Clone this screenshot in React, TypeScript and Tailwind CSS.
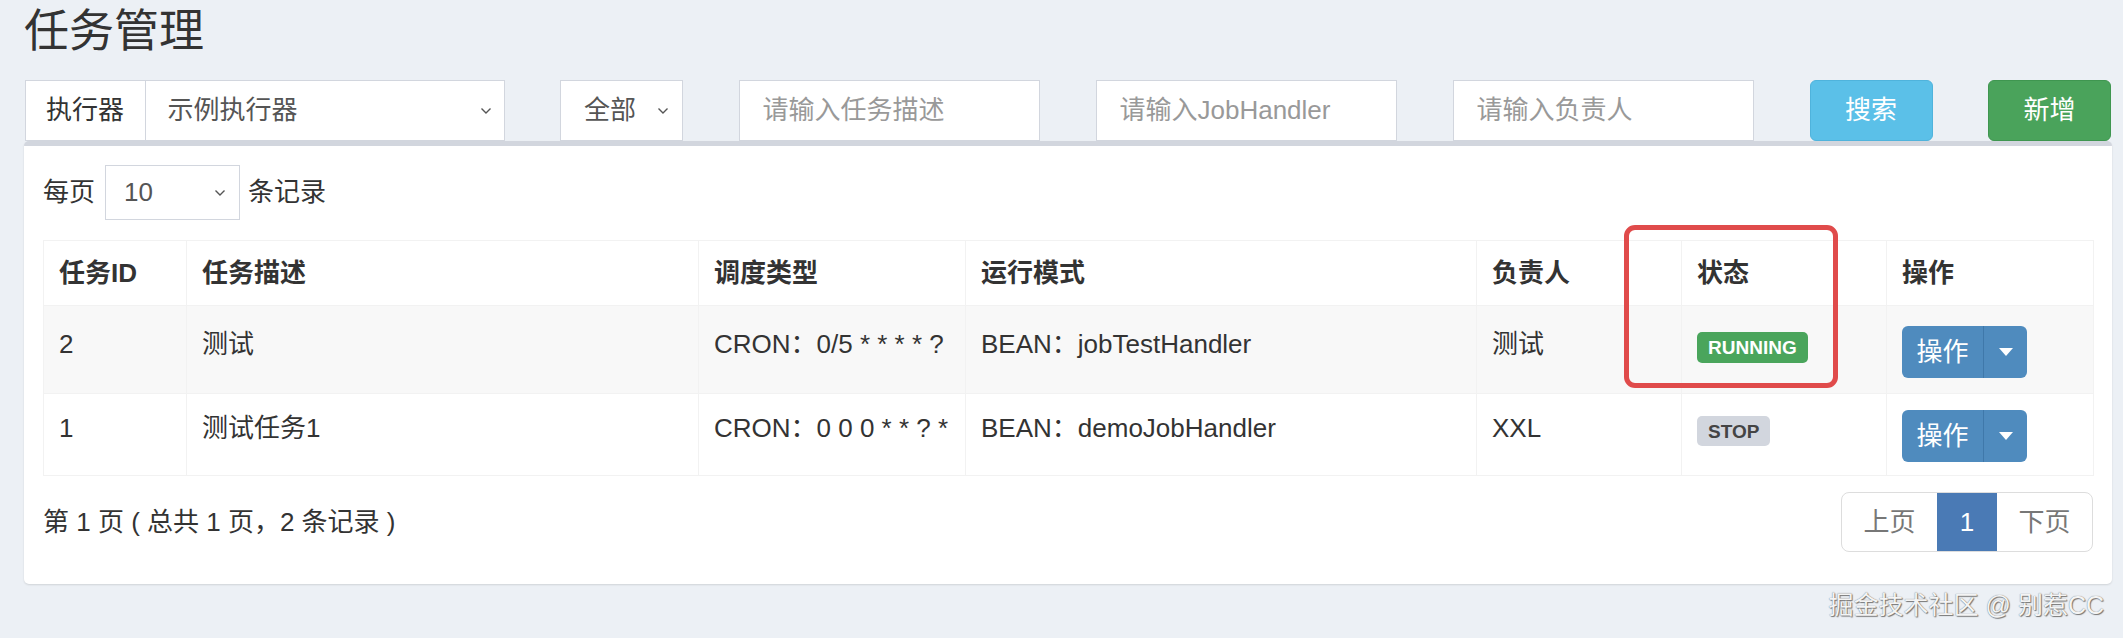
import React from 'react'

const font = "font-['Liberation_Sans','Noto_Sans_CJK_SC',sans-serif]"

function Chevron() {
  return (
    <svg width="12" height="8" viewBox="0 0 12 8" className="shrink-0">
      <path d="M1.5 1.5l4.5 4.5 4.5-4.5" fill="none" stroke="#555" strokeWidth="1.4" />
    </svg>
  )
}

function SelectBox({ value, className = '' }: { value: string; className?: string }) {
  return (
    <div className={`flex items-center justify-between bg-white border border-[#d2d6de] text-[#555] ${className}`}>
      <span>{value}</span>
      <Chevron />
    </div>
  )
}

function TextInput({ placeholder }: { placeholder: string }) {
  return (
    <input
      placeholder={placeholder}
      className="w-full h-[61px] bg-white border border-[#d2d6de] pl-[23px] outline-none text-[#555] placeholder:text-[#999]"
    />
  )
}

function OpButton() {
  return (
    <div className="flex h-[52px] w-[125px] rounded-[6px] overflow-hidden bg-[#4f8bbe] text-white">
      <div className="w-[81px] flex items-center justify-center">操作</div>
      <div className="flex-1 flex items-center justify-center border-l border-[#3f78aa]">
        <div className="w-0 h-0 border-x-[7px] border-t-[8px] border-x-transparent border-t-white" />
      </div>
    </div>
  )
}

const jobs = [
  { id: '2', desc: '测试', cron: 'CRON：0/5 * * * * ?', mode: 'BEAN：jobTestHandler', author: '测试', running: true },
  { id: '1', desc: '测试任务1', cron: 'CRON：0 0 0 * * ? *', mode: 'BEAN：demoJobHandler', author: 'XXL', running: false },
]

const cols = [143, 512, 267, 511, 205, 205, 207]
const heads = ['任务ID', '任务描述', '调度类型', '运行模式', '负责人', '状态', '操作']

export default function App() {
  return (
    <div className={`relative w-[2123px] h-[638px] overflow-hidden bg-[#ecf0f5] text-[26px] leading-[37px] text-[#333] ${font}`}>
      {/* header */}
      <h1 className="pt-[8px] pl-[24px] text-[45px] leading-[48px] text-[#333]">任务管理</h1>

      {/* filters */}
      <div className="mt-[24px] ml-[-3.25px] grid grid-cols-[repeat(12,178.5px)]">
        <div className="col-span-3 px-[27.75px]">
          <div className="flex h-[61px]">
            <div className="w-[121px] flex items-center justify-center bg-white border border-[#d2d6de]">执行器</div>
            <SelectBox value="示例执行器" className="flex-1 border-l-0 pl-[22px] pr-[12px]" />
          </div>
        </div>
        <div className="col-span-1 px-[27.75px]">
          <SelectBox value="全部" className="h-[61px] pl-[23px] pr-[13px]" />
        </div>
        <div className="col-span-2 px-[27.75px]">
          <TextInput placeholder="请输入任务描述" />
        </div>
        <div className="col-span-2 px-[27.75px]">
          <TextInput placeholder="请输入JobHandler" />
        </div>
        <div className="col-span-2 px-[27.75px]">
          <TextInput placeholder="请输入负责人" />
        </div>
        <div className="col-span-1 px-[27.75px]">
          <button className="w-full h-[61px] rounded-[6px] bg-[#5bc0e8] border border-[#4fb3dc] text-white">搜索</button>
        </div>
        <div className="col-span-1 px-[27.75px]">
          <button className="w-full h-[61px] rounded-[6px] bg-[#4aa35b] border border-[#3f9650] text-white">新增</button>
        </div>
      </div>

      {/* box */}
      <div className="ml-[24px] w-[2088px] bg-white border-t-[5px] border-[#d2d6de] rounded-[5px] shadow-[0_1px_2px_rgba(0,0,0,0.12)] pt-[19px] pl-[19px] pr-[19px] pb-[32px]">
        <div className="flex items-center h-[55px]">
          <span>每页</span>
          <SelectBox value="10" className="ml-[10px] w-[135px] h-[55px] pl-[18px] pr-[13px]" />
          <span className="ml-[8px]">条记录</span>
        </div>

        <table className="mt-[20px] table-fixed border-collapse w-[2050px]">
          <colgroup>
            {cols.map((w, i) => (
              <col key={i} style={{ width: w }} />
            ))}
          </colgroup>
          <thead>
            <tr className="h-[65px]">
              {heads.map(h => (
                <th key={h} className="text-left font-bold px-[15px] align-middle border border-[#f2f2f2]">
                  {h}
                </th>
              ))}
            </tr>
          </thead>
          <tbody>
            {jobs.map((j, i) => {
              const row = i === 0 ? 'h-[88px] bg-[#f8f8f8]' : 'h-[82px] bg-white'
              const td = `align-top px-[15px] border border-[#f2f2f2] ${i === 0 ? 'pt-[20px]' : 'pt-[16px]'}`
              return (
                <tr key={j.id} className={row}>
                  <td className={td}>{j.id}</td>
                  <td className={td}>{j.desc}</td>
                  <td className={td}>{j.cron}</td>
                  <td className={td}>{j.mode}</td>
                  <td className={td}>{j.author}</td>
                  <td className={td}>
                    {j.running ? (
                      <span className="mt-[6px] inline-flex items-center h-[31px] px-[11px] rounded-[5px] bg-[#4aa55c] text-white text-[19px] leading-none font-bold">
                        RUNNING
                      </span>
                    ) : (
                      <span className="mt-[6px] inline-flex items-center h-[30px] px-[11px] rounded-[5px] bg-[#d2d6de] text-[#444] text-[19px] leading-none font-bold">
                        STOP
                      </span>
                    )}
                  </td>
                  <td className={td}>
                    <OpButton />
                  </td>
                </tr>
              )
            })}
          </tbody>
        </table>

        <div className="mt-[16px] flex items-center justify-between h-[60px]">
          <span>第 1 页 ( 总共 1 页，2 条记录 )</span>
          <div className="flex h-[60px] border border-[#ddd] rounded-[8px] overflow-hidden text-[#777]">
            <div className="w-[95px] flex items-center justify-center">上页</div>
            <div className="w-[60px] flex items-center justify-center bg-[#4a7ab5] text-white">1</div>
            <div className="w-[95px] flex items-center justify-center">下页</div>
          </div>
        </div>
      </div>

      {/* watermark */}
      <div className="mt-[6px] pr-[19px] flex justify-end text-[25px] leading-[30px] text-[#f4f4f4] [text-shadow:0_0_1px_#666,1px_1px_1px_#777]">
        掘金技术社区 @ 别惹CC
      </div>

      {/* annotation */}
      <div className="absolute left-[1624px] top-[225px] w-[214px] h-[163px] border-[5px] border-[#e04b4b] rounded-[11px]" />
    </div>
  )
}
